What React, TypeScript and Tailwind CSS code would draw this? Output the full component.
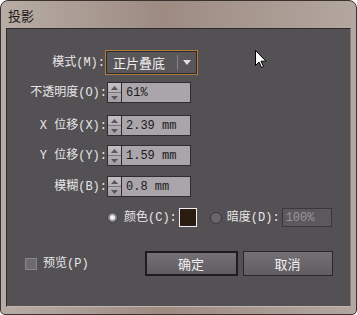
import React from 'react'

const labelFont = "font-['Liberation_Mono','Noto_Sans_CJK_SC',monospace]"

function Stepper() {
  return (
    <div className="w-[14px] h-[21px] flex flex-col border border-[#2f2c30] border-r-0 bg-[linear-gradient(180deg,#c4c0c4,#a19da2)]">
      <div className="flex-1 flex items-center justify-center border-b border-[#7a767b]">
        <svg width="7" height="4" viewBox="0 0 7 4"><path d="M0 4 L3.5 0 L7 4 Z" fill="#5a565b" /></svg>
      </div>
      <div className="flex-1 flex items-center justify-center">
        <svg width="7" height="4" viewBox="0 0 7 4"><path d="M0 0 L3.5 4 L7 0 Z" fill="#5a565b" /></svg>
      </div>
    </div>
  )
}

function NumberRow({ label, value, mt }: { label: string; value: string; mt: string }) {
  return (
    <div className={`flex items-center ${mt}`}>
      <div className={`w-[100px] text-right text-[12px] text-[#e8e6e8] ${labelFont}`}>{label}</div>
      <Stepper />
      <div className={`w-[70px] h-[21px] flex items-center pl-[4px] bg-[#a9a5aa] border border-[#2f2c30] text-[12px] text-[#1c1a1c] ${labelFont}`}>
        {value}
      </div>
    </div>
  )
}

export default function App() {
  return (
    <div className="w-[357px] h-[315px] relative rounded-t-[8px] rounded-b-[5px] border border-[#3a322e] bg-[linear-gradient(90deg,#b8ada6,#9d8b82_45%,#b3a79f)] flex flex-col overflow-hidden">
      {/* Title */}
      <div className="h-[27px] pl-[7px] pt-[5px] text-[13px] text-[#1e1a18] font-['Noto_Sans_CJK_SC',sans-serif]">投影</div>

      {/* Body */}
      <div className="mx-[5px] mb-[7px] flex-1 relative bg-[#545155] border border-[#2e2a2e] border-r-[#857a74] border-b-[#c4b8ae]">
        <div className="pt-[21px]">
          {/* Mode */}
          <div className="flex items-center">
            <div className={`w-[98px] text-right text-[12px] text-[#e8e6e8] ${labelFont}`}>模式(M):</div>
            <div className="w-[93px] h-[25px] border border-[#b47a40] bg-[#3a3639]">
              <div className="h-full border border-[#2c292c] bg-[#5a575b] flex items-center">
                <span className="pl-[6px] w-[70px] text-[13px] text-[#f0eef0] font-['Noto_Sans_CJK_SC',sans-serif] leading-none">正片叠底</span>
                <div className="w-px h-[15px] bg-[#858186]" />
                <div className="flex-1 flex justify-center">
                  <svg width="8" height="5" viewBox="0 0 8 5"><path d="M0 0 L4 5 L8 0 Z" fill="#e0dee0" /></svg>
                </div>
              </div>
            </div>
          </div>

          <NumberRow label="不透明度(O):" value="61%" mt="mt-[7px]" />
          <NumberRow label="X 位移(X):" value="2.39 mm" mt="mt-[12px]" />
          <NumberRow label="Y 位移(Y):" value="1.59 mm" mt="mt-[9px]" />
          <NumberRow label="模糊(B):" value="0.8 mm" mt="mt-[10px]" />

          {/* Color / darkness */}
          <div className="flex items-center mt-[11px] pl-[100px] h-[19px]">
            <div className="w-[11px] h-[11px] rounded-full bg-[#8e8a8f] border border-[#3a373b] flex items-center justify-center">
              <div className="w-[5px] h-[5px] rounded-full bg-[#f2f0f2]" />
            </div>
            <span className={`ml-[6px] text-[12px] text-[#e8e6e8] ${labelFont}`}>颜色(C):</span>
            <div className="ml-[2px] w-[18px] h-[19px] border border-[#f0eef0] bg-[#2a1c10]" />
            <div className="ml-[13px] w-[12px] h-[12px] rounded-full bg-[#6a666b] border border-[#3a373b]" />
            <span className={`ml-[5px] text-[12px] text-[#e8e6e8] ${labelFont}`}>暗度(D):</span>
            <div className={`ml-[2px] w-[50px] h-[19px] flex items-center pl-[3px] bg-[#5c595d] border border-[#3a373b] text-[12px] text-[#9a969b] ${labelFont}`}>
              100%
            </div>
          </div>

          {/* Bottom */}
          <div className="flex items-center mt-[24px]">
            <div className="ml-[18px] w-[12px] h-[12px] bg-[#6e6a6f] border border-[#8a868b]" />
            <span className={`ml-[6px] text-[12px] text-[#e8e6e8] ${labelFont}`}>预览(P)</span>
            <div className="ml-[56px] w-[93px] h-[25px] border-2 border-[#1e1c1f] bg-[linear-gradient(180deg,#747075,#605c61)] flex items-center justify-center text-[13px] text-[#f2f0f2] font-['Noto_Sans_CJK_SC',sans-serif]">
              确定
            </div>
            <div className="ml-[5px] w-[90px] h-[25px] border border-[#2a272b] bg-[linear-gradient(180deg,#747075,#605c61)] flex items-center justify-center text-[13px] text-[#f2f0f2] font-['Noto_Sans_CJK_SC',sans-serif]">
              取消
            </div>
          </div>
        </div>

        {/* Mouse cursor */}
        <svg className="absolute left-[248px] top-[21px]" width="13" height="19" viewBox="0 0 13 19">
          <path d="M0.5 0.5 L0.5 15.5 L4 12 L6.5 17.5 L8.5 16.6 L6 11.2 L11 11.2 Z" fill="#ffffff" stroke="#000000" strokeWidth="1" strokeLinejoin="round" />
        </svg>
      </div>
    </div>
  )
}
